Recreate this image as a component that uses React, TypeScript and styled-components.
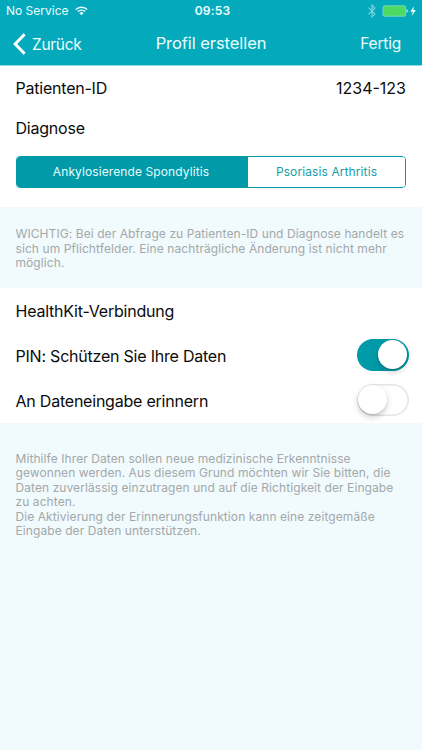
import React, { useState } from "react";
import styled, { createGlobalStyle } from "styled-components";

const GlobalStyle = createGlobalStyle`
  * { box-sizing: border-box; }
  body {
    margin: 0;
    background: #f1fafc;
    font-family: Inter, "Liberation Sans", sans-serif;
    color: #0b0b0b;
  }
  button { font: inherit; border: 0; padding: 0; background: none; cursor: pointer; }
`;

const Screen = styled.main`
  width: 422px;
  min-height: 750px;
  background: #f1fafc;
  white-space: nowrap;
`;

const Header = styled.header`
  height: 66px;
  background: #04aabb;
  border-bottom: 1px solid #8fdbe3;
  color: #ecfdff;
`;

const StatusBar = styled.div`
  display: grid;
  grid-template-columns: 1fr auto 1fr;
  align-items: center;
  height: 22px;
  padding: 0 5px 0 6px;
  font-size: 12px;
  line-height: 22px;
`;

const Carrier = styled.div`
  display: flex;
  align-items: center;
  gap: 6px;
`;

const Clock = styled.div`
  padding-left: 2px;
  font-weight: 600;
  font-size: 12px;
  letter-spacing: 0.2px;
`;

const Indicators = styled.div`
  display: flex;
  justify-content: flex-end;
  align-items: center;
  gap: 6px;
`;

const NavBar = styled.nav`
  display: grid;
  grid-template-columns: 1fr auto 1fr;
  align-items: center;
  height: 43px;
  padding: 0 13px;
  font-size: 15.5px;
`;

const BackButton = styled.button`
  display: flex;
  align-items: center;
  gap: 6px;
  color: inherit;
  letter-spacing: -0.3px;
`;

const BackText = styled.span`
  padding-top: 2px;
`;

const Title = styled.h1`
  margin: -2px 0 0;
  font-size: 16.5px;
  font-weight: 400;
  letter-spacing: -0.07px;
`;

const DoneButton = styled.button`
  && {
    justify-self: end;
    margin: 0 8px 0 0;
    color: inherit;
    letter-spacing: -0.2px;
  }
`;

const Panel = styled.section`
  background: #fff;
  padding: 0 16px;
`;

const FormPanel = styled(Panel)`
  height: 141px;
`;

const Row = styled.div<{ $height: number }>`
  display: flex;
  align-items: center;
  justify-content: space-between;
  height: ${(p) => p.$height}px;
`;

const Label = styled.span`
  margin-left: -0.5px;
  font-size: 16px;
  line-height: 20px;
  letter-spacing: -0.22px;
`;

const Value = styled(Label)`
  letter-spacing: 0;
`;

const Segments = styled.div`
  display: grid;
  grid-template-columns: 231px 1fr;
  height: 32px;
  margin-top: 10px;
  width: 390px;
  border: 1px solid #019aa8;
  border-radius: 4px;
  overflow: hidden;
`;

const Segment = styled.button<{ $active: boolean }>`
  && {
    padding-bottom: 1px;
    font-size: 12px;
    letter-spacing: 0.1px;
    color: ${(p) => (p.$active ? "#e6fcff" : "#159eac")};
    background: ${(p) => (p.$active ? "#019aa8" : "#fff")};
  }
  &&:first-child { padding-right: 3px; }
`;

const Note = styled.p<{ $top: number; $height: number }>`
  margin: 0;
  height: ${(p) => p.$height}px;
  padding: ${(p) => p.$top}px 0 0 15.5px;
  font-size: 12px;
  line-height: 14.6px;
  letter-spacing: 0.08px;
  color: #a3a8aa;
`;

const Track = styled.button<{ $on: boolean }>`
  && {
    display: flex;
    justify-content: ${(p) => (p.$on ? "flex-end" : "flex-start")};
    align-items: center;
    width: 52px;
    height: 32px;
    margin: -2px -3px 0 0;
    padding: ${(p) => (p.$on ? "0 2px" : "0 1px")};
    border-radius: 16px;
    background: ${(p) => (p.$on ? "#019aa8" : "#fff")};
    box-shadow: ${(p) => (p.$on ? "none" : "inset 0 0 0 1.5px #e5e5e5")};
  }
`;

const Knob = styled.span`
  width: 29px;
  height: 29px;
  border-radius: 50%;
  background: #fff;
  box-shadow: 0 3px 6px rgba(0, 0, 0, 0.2), 0 1px 1px rgba(0, 0, 0, 0.1);
`;

const WifiIcon = () => (
  <svg width="13" height="10" viewBox="0 0 13 10" fill="none" stroke="currentColor">
    <path d="M.8 3.5a8.2 8.2 0 0 1 11.4 0" strokeWidth="1.5" />
    <path d="M2.8 5.6a5.3 5.3 0 0 1 7.4 0" strokeWidth="1.4" />
    <path d="M6.5 9.2 4.3 7a3.1 3.1 0 0 1 4.4 0z" fill="currentColor" stroke="none" />
  </svg>
);

const BluetoothIcon = () => (
  <svg width="8" height="14" viewBox="0 0 8 14" fill="none" stroke="#7fd3dc" strokeWidth="1.1">
    <path d="M.6 3.7 7 10.1 4 13V1l3 2.9L.6 10.3" />
  </svg>
);

const BatteryIcon = () => (
  <svg width="35" height="12" viewBox="0 0 35 12">
    <rect x="1" y=".8" width="22.6" height="10.4" rx="1.5" fill="#4cd964" stroke="#8bd9cb" strokeWidth=".8" />
    <path d="M24.5 4.1c1.7.4 1.7 3.4 0 3.8z" fill="#bff0f2" />
    <path d="M32 1.2 28.3 6.7h2.5l-1.1 4.2 4.2-5.8h-2.6z" fill="#edfdff" />
  </svg>
);

const BackIcon = () => (
  <svg width="13" height="22" viewBox="0 0 13 22" fill="none" stroke="#fff" strokeWidth="3">
    <path d="M11.6 1.2 2.2 11l9.4 9.8" />
  </svg>
);

function Toggle({ label, initial }: { label: string; initial: boolean }) {
  const [on, setOn] = useState(initial);
  return (
    <Track role="switch" aria-label={label} aria-checked={on} $on={on} onClick={() => setOn(!on)}>
      <Knob />
    </Track>
  );
}

export default function App() {
  const [diagnosis, setDiagnosis] = useState(0);
  return (
    <>
      <GlobalStyle />
      <Screen>
        <Header>
          <StatusBar>
            <Carrier>No Service <WifiIcon /></Carrier>
            <Clock>09:53</Clock>
            <Indicators>
              <BluetoothIcon />
              <BatteryIcon />
            </Indicators>
          </StatusBar>
          <NavBar>
            <BackButton><BackIcon /><BackText>Zurück</BackText></BackButton>
            <Title>Profil erstellen</Title>
            <DoneButton>Fertig</DoneButton>
          </NavBar>
        </Header>

        <FormPanel>
          <Row $height={44}>
            <Label>Patienten-ID</Label>
            <Value>1234-123</Value>
          </Row>
          <Row $height={36}>
            <Label>Diagnose</Label>
          </Row>
          <Segments>
            {["Ankylosierende Spondylitis", "Psoriasis Arthritis"].map((name, i) => (
              <Segment key={name} $active={diagnosis === i} onClick={() => setDiagnosis(i)}>
                {name}
              </Segment>
            ))}
          </Segments>
        </FormPanel>

        <Note $top={20} $height={81}>
          WICHTIG: Bei der Abfrage zu Patienten-ID und Diagnose handelt es<br />
          sich um Pflichtfelder. Eine nachträgliche Änderung ist nicht mehr<br />
          möglich.
        </Note>

        <Panel>
          <Row $height={45}><Label>HealthKit-Verbindung</Label></Row>
          <Row $height={45}>
            <Label>PIN: Schützen Sie Ihre Daten</Label>
            <Toggle label="PIN" initial={true} />
          </Row>
          <Row $height={45}>
            <Label>An Dateneingabe erinnern</Label>
            <Toggle label="Erinnerung" initial={false} />
          </Row>
        </Panel>

        <Note $top={28.5} $height={327}>
          Mithilfe Ihrer Daten sollen neue medizinische Erkenntnisse<br />
          gewonnen werden. Aus diesem Grund möchten wir Sie bitten, die<br />
          Daten zuverlässig einzutragen und auf die Richtigkeit der Eingabe<br />
          zu achten.<br />
          Die Aktivierung der Erinnerungsfunktion kann eine zeitgemäße<br />
          Eingabe der Daten unterstützen.
        </Note>
      </Screen>
    </>
  );
}
